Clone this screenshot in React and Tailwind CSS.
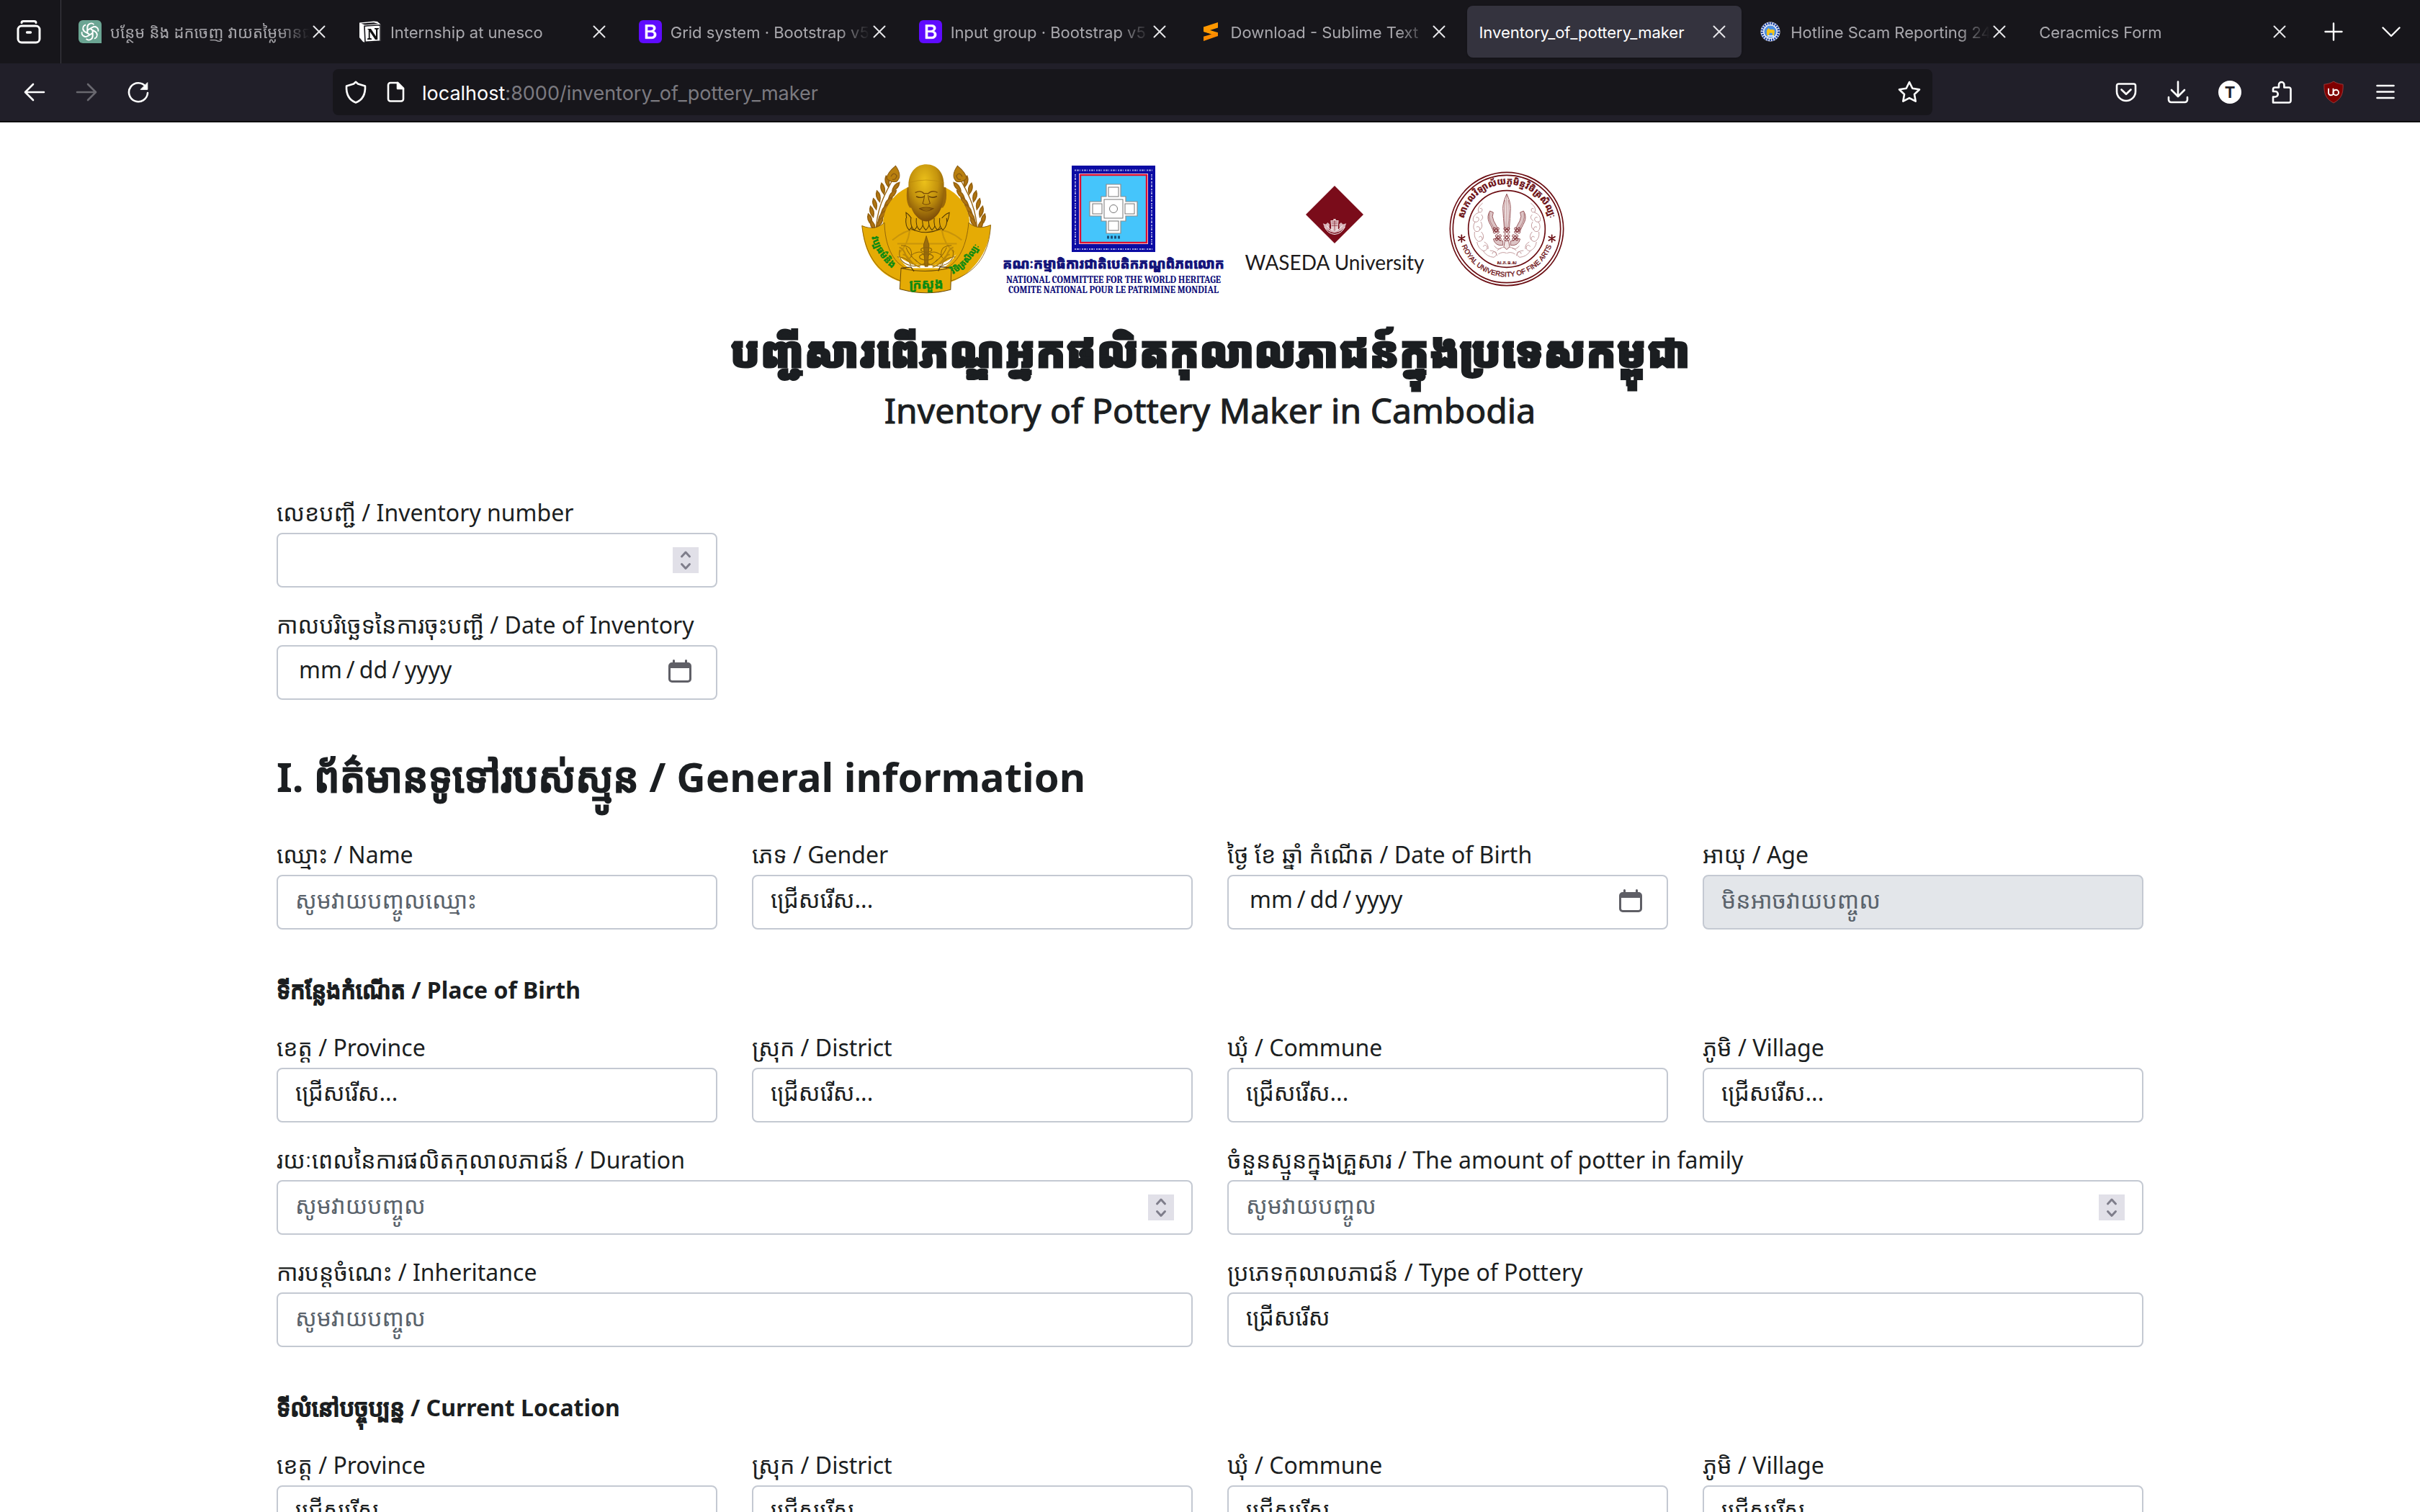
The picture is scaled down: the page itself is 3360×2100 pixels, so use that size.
import React, { useId } from "react";

const stroke = {
  fill: "none",
  stroke: "currentColor",
  strokeWidth: 2.6,
  strokeLinecap: "round",
  strokeLinejoin: "round",
};

function Icon({ children, className = "size-8" }) {
  return (
    <svg viewBox="0 0 32 32" className={className + " shrink-0"} aria-hidden="true" {...stroke}>
      {children}
    </svg>
  );
}

/* ---------- favicons ---------- */

function ChatFavicon() {
  return (
    <svg viewBox="0 0 32 32" className="size-8 shrink-0" aria-hidden="true">
      <path d="M6 0H26a6 6 0 0 1 6 6V32H6a6 6 0 0 1-6-6V6a6 6 0 0 1 6-6Z" fill="#6ba593" />
      <g fill="none" stroke="#fff" strokeWidth="1.7">
        {[0, 60, 120, 180, 240, 300].map((a) => (
          <path
            key={a}
            transform={`rotate(${a} 16 16)`}
            d="M12.4 18V9.6a5.2 5.2 0 0 1 9-3.4M12.4 13.9l7.2-4.2a5 5 0 0 1 4.8 0"
            strokeLinejoin="round"
          />
        ))}
      </g>
    </svg>
  );
}

function NotionFavicon() {
  return (
    <svg viewBox="0 0 32 32" className="size-8 shrink-0" aria-hidden="true">
      <path d="M1 3.5 21 1.6 26 2l5 4.4V29l-22 2-3-1-5-6Z" fill="#fff" />
      <path d="M8 8.2 30 6.8V29L9 30.4Z" fill="#fff" stroke="#16151a" strokeWidth="1.6" />
      <path d="M3.4 4.6 21 3.2l6.4 1.9L8.4 6.5Z" fill="#16151a" />
      <path
        d="M12.5 12H17l7 10.4V13l-2-.6V11h6v1.3l-1.8.7v14H23l-7.4-11v8.8l2.4.6V27h-6v-1.4l1.8-.7V13.3l-1.4-.2Z"
        fill="#111"
      />
    </svg>
  );
}

function BootstrapFavicon() {
  return (
    <svg viewBox="0 0 32 32" className="size-8 shrink-0" aria-hidden="true">
      <rect width="32" height="32" rx="6" fill="#5f0bff" />
      <path
        d="M9 6.4h8.6c3.6 0 5.6 1.7 5.6 4.6 0 2.2-1.4 3.8-3.3 4.2 2.5.3 4.2 2.1 4.2 4.7 0 3.6-2.6 5.8-6.6 5.8H9Zm3 2.6v5.4h4.2c2.6 0 3.9-1 3.9-2.8S18.9 9 16.9 9Zm0 7.8v6.3h5.1c2.5 0 3.9-1.1 3.9-3.1s-1.5-3.2-4.3-3.2Z"
        fill="#fff"
        stroke="#fff"
        strokeWidth="0.6"
        fillRule="evenodd"
      />
    </svg>
  );
}

function SublimeFavicon() {
  return (
    <svg viewBox="0 0 32 32" className="size-8 shrink-0" aria-hidden="true">
      <path d="M6 9.5 26 3v7.500L13.500 14.600 26 18.300V22L6 16Z" fill="#ff9800" />
      <path d="M6 9.500v6.300l20 6.500v-5L13.500 13.500Z" fill="#ff9800" />
      <path d="M13 20.800 22 17.500l4 .6V22L6 29v-6.300Z" fill="#fb8a00" />
    </svg>
  );
}

function PoliceFavicon() {
  return (
    <svg viewBox="0 0 32 32" className="size-8 shrink-0" aria-hidden="true">
      <circle cx="16" cy="16" r="13.500" fill="#e9eefb" />
      <circle cx="16" cy="16" r="11.500" fill="none" stroke="#1c3f9b" strokeWidth="3.200" strokeDasharray="2 1.400" />
      <circle cx="16" cy="16" r="8.500" fill="#4e8fe0" />
      <path d="M11 20v-6l2.500-3 2 2h5l1.500 2-1 6h-2v-3l-4-.500-1 4h-2Z" fill="#f5c518" />
      <path d="M12 21h9v2h-9Z" fill="#d8e6fb" />
    </svg>
  );
}

function CloseIcon() {
  return (
    <svg viewBox="0 0 18 18" className="size-[18px]" fill="none" stroke="#e6e6ea" strokeWidth="2" strokeLinecap="round" aria-hidden="true">
      <path d="M1.500 1.500 16.500 16.500M16.500 1.500 1.500 16.500" />
    </svg>
  );
}

/* ---------- browser chrome ---------- */

const tabs = [
  { title: "បន្ថែម និង ដកចេញ វាយតម្លៃមានជា", icon: ChatFavicon },
  { title: "Internship at unesco", icon: NotionFavicon },
  { title: "Grid system · Bootstrap v5", icon: BootstrapFavicon },
  { title: "Input group · Bootstrap v5", icon: BootstrapFavicon },
  { title: "Download - Sublime Text", icon: SublimeFavicon },
  { title: "Inventory_of_pottery_maker", active: true },
  { title: "Hotline Scam Reporting 24", icon: PoliceFavicon },
  { title: "Ceracmics Form" },
];

function Tab({ title, icon: TabIcon, active }) {
  return (
    <div
      className={
        "mx-1 my-2 flex h-[72px] min-w-0 flex-1 items-center rounded-lg pl-4 pr-[22px] " +
        (active ? "bg-[#34333e] text-white shadow" : "text-[#a9a8ad]")
      }
    >
      {TabIcon && (
        <span className="mr-3 shrink-0">
          <TabIcon />
        </span>
      )}
      <span
        className={
          "mr-1 min-w-0 flex-1 overflow-hidden whitespace-nowrap pt-0.5 text-[22px] leading-10 " +
          (active ? "" : "[mask-image:linear-gradient(to_right,black_calc(100%_-_44px),transparent)]")
        }
      >
        {title}
      </span>
      <button type="button" aria-label={"Close " + title} className="shrink-0">
        <CloseIcon />
      </button>
    </div>
  );
}

function TabStrip() {
  return (
    <div className="flex h-[88px] items-center bg-[#17161b]">
      <button type="button" aria-label="Firefox View" className="flex w-[84px] justify-center pr-1 text-white">
        <svg viewBox="0 0 34 34" className="size-[34px]" fill="none" stroke="currentColor" strokeWidth="3" strokeLinecap="round" aria-hidden="true">
          <path d="M7 4.500Q7.300 2.500 9.500 2.500h15Q26.700 2.500 27 4.500" />
          <rect x="2" y="9" width="30" height="23" rx="5" />
          <path d="M14.500 18h5" strokeWidth="3.400" />
        </svg>
      </button>
      <div className="mr-1 h-full w-px bg-[#3f3e46]" />
      <div className="flex min-w-0 flex-1">
        {tabs.map((t, i) => (
          <Tab key={i} {...t} />
        ))}
      </div>
      <button type="button" aria-label="New tab" className="flex w-20 justify-center text-white">
        <svg viewBox="0 0 26 26" className="size-[26px]" fill="none" stroke="currentColor" strokeWidth="2.400" strokeLinecap="round" aria-hidden="true">
          <path d="M13 1.500v23M1.500 13h23" />
        </svg>
      </button>
      <button type="button" aria-label="List all tabs" className="flex w-20 justify-center text-white">
        <svg viewBox="0 0 26 26" className="size-[26px]" fill="none" stroke="currentColor" strokeWidth="2.400" strokeLinecap="round" strokeLinejoin="round" aria-hidden="true">
          <path d="M1.500 7.500 13 19 24.500 7.500" />
        </svg>
      </button>
    </div>
  );
}

function ToolButton({ label, children, className = "text-white" }) {
  return (
    <button type="button" aria-label={label} className={"flex w-[72px] justify-center " + className}>
      {children}
    </button>
  );
}

function Toolbar() {
  return (
    <div className="flex h-[82px] items-center border-b-2 border-[#0c0c0d] bg-[#211f29] pl-3 pr-3">
      <ToolButton label="Back">
        <Icon><path d="M29 16H3.500M14 5 3 16l11 11" /></Icon>
      </ToolButton>
      <ToolButton label="Forward" className="text-[#69686f]">
        <Icon><path d="M3 16h25.500M18 5l11 11-11 11" /></Icon>
      </ToolButton>
      <ToolButton label="Reload">
        <Icon>
          <path d="M26.500 8.500A13 13 0 1 0 29 17" />
          <path d="M28.800 3v9.300h-9.300Z" fill="currentColor" strokeWidth="1" />
        </Icon>
      </ToolButton>
      <div className="ml-[234px] mr-[233px] flex h-16 flex-1 items-center rounded-lg bg-[#17161b] pl-4 pr-4">
        <Icon>
          <path d="M16 1.800 19 4.500 29 7.500C29.500 19 25 27 16 30.500 7 27 2.500 19 3 7.500L13 4.500Z" stroke="white" />
        </Icon>
        <svg viewBox="0 0 32 32" className="ml-6 size-8 shrink-0" fill="none" stroke="white" strokeWidth="2.600" strokeLinejoin="round" aria-hidden="true">
          <path d="M8 3h10l8 8v14.500a3 3 0 0 1-3 3H8a3 3 0 0 1-3-3V6a3 3 0 0 1 3-3Z" />
          <path d="M18 3v8h8Z" fill="white" />
        </svg>
        <div className="ml-5 flex-1 whitespace-nowrap pt-1 text-[27px] leading-10 text-[#7b7a80]">
          <span className="text-white">localhost</span>:8000/inventory_of_pottery_maker
        </div>
        <button type="button" aria-label="Bookmark this page" className="text-white">
          <Icon><path d="m16 2 4.300 8.800 9.700 1.400-7 6.800 1.700 9.700-8.700-4.600-8.700 4.600L9 19 2 12.200l9.700-1.400Z" /></Icon>
        </button>
      </div>
      <ToolButton label="Save to Pocket">
        <Icon>
          <path d="M5.500 4.500h21a2.500 2.500 0 0 1 2.500 2.500v8a13 13 0 0 1-26 0V7a2.500 2.500 0 0 1 2.500-2.500Z" />
          <path d="m9.500 12.500 6.500 6.300 6.500-6.300" />
        </Icon>
      </ToolButton>
      <ToolButton label="Downloads">
        <Icon>
          <path d="M16 1.500v20M7 13l9 9 9-9" />
          <path d="M3 23v3.500A3.500 3.500 0 0 0 6.500 30h19a3.500 3.500 0 0 0 3.500-3.500V23" />
        </Icon>
      </ToolButton>
      <ToolButton label="Account">
        <span className="flex size-8 items-center justify-center rounded-full bg-white text-[22px] font-bold leading-8 text-[#211f29]">T</span>
      </ToolButton>
      <ToolButton label="Extensions">
        <Icon>
          <path d="M4 30.500V22.500h3a3.700 3.700 0 0 0 0-7.500H4v-3a2.500 2.500 0 0 1 2.500-2.500H12V5.700a3.700 3.700 0 0 1 7.400 0V9.500H26A2.500 2.500 0 0 1 28.500 12V28a2.500 2.500 0 0 1-2.500 2.500Z" />
        </Icon>
      </ToolButton>
      <ToolButton label="uBlock Origin">
        <svg viewBox="0 0 32 34" className="h-8 w-[30px]" aria-hidden="true">
          <path d="M16 1C20 4 26 5 30 5.500 30.500 20 27 27 16 33 5 27 1.500 20 2 5.500 6 5 12 4 16 1Z" fill="#800000" stroke="#9b3b3b" />
          <path d="M8.500 11.500v6.500a3.500 3.500 0 0 0 3.500 3.500q2 0 3.500-1.500V11.500" fill="none" stroke="#fff" strokeWidth="2" />
          <circle cx="19.500" cy="17.500" r="4" fill="none" stroke="#fff" strokeWidth="2" />
        </svg>
      </ToolButton>
      <ToolButton label="Open application menu">
        <Icon><path d="M4.500 7h23M4.500 15.500h23M4.500 24h23" /></Icon>
      </ToolButton>
    </div>
  );
}

/* ---------- institution logos ---------- */

const leaves = [
  [150, 128, -12], [182, 150, 38], [132, 158, -12], [168, 182, 42], [114, 190, -14],
  [152, 212, 42], [100, 222, -14], [138, 242, 40], [88, 254, -14], [126, 270, 36], [80, 286, -16], [118, 298, 30], [92, 312, -20],
];

function Garland() {
  return (
    <g>
      <path d="M175 110C150 160 105 230 104 335" fill="none" stroke="#9a6612" strokeWidth="4" />
      {leaves.map(([x, y, r], i) => (
        <path key={i} d={`M${x} ${y - 26}q14 20 0 46q-14-26 0-46Z`} transform={`rotate(${r} ${x} ${y})`} fill="#b0740f" stroke="#96620f" strokeWidth="5" />
      ))}
      <path d="M183 60C200 85 206 110 186 126Q160 130 147 112Q148 90 183 60Z" fill="#b9800f" stroke="#8a5a12" strokeWidth="3" />
      <path d="M164 105q12-24 24-3q-6 20-18 14" fill="none" stroke="#8a5a12" strokeWidth="4" />
    </g>
  );
}

function MinistryLogo() {
  return (
    <svg viewBox="0 0 182 182" className="size-[182px] shrink-0" role="img" aria-label="Ministry of Culture and Fine Arts">
      <defs>
        <radialGradient id="gold-head" cx="0.450" cy="0.300" r="0.700">
          <stop offset="0" stopColor="#ecc11a" />
          <stop offset="0.550" stopColor="#c4930d" />
          <stop offset="1" stopColor="#7c4c08" />
        </radialGradient>
        <path id="arc-left" d="M14 102Q22 134 56 156" />
        <path id="arc-right" d="M127 154Q158 136 170 98" />
      </defs>
      <g transform="scale(0.344 0.333) translate(-45 -50)">
        <Garland />
        <g transform="translate(616 0) scale(-1 1)"><Garland /></g>
        <ellipse cx="307" cy="305" rx="175" ry="172" fill="#e5ab05" />
        <path d="M47 308C90 330 110 320 138 296C170 380 190 460 240 487H375C430 450 455 380 478 297C510 320 530 322 567 305C565 400 510 505 405 545H208C100 510 55 420 47 308Z" fill="#e5ab05" />
        <path d="M47 310C85 325 110 320 138 297C140 390 170 460 225 488M567 307C530 322 505 320 478 297C470 390 440 460 385 488M47 310C60 420 100 500 203 540M567 307C560 420 520 500 407 540" fill="none" stroke="#80560a" strokeWidth="2.500" />
        <path d="M170 370Q240 310 300 330Q380 310 450 370M190 385h240M240 330q-8 60-40 90M370 330q10 60 50 90" fill="none" stroke="#c8940a" strokeWidth="6" />
        {[0, 1].map((k) => (
          <g key={k} transform={k ? "translate(614 0) scale(-1 1)" : undefined}>
            <path d="M205 392q45 0 42 40q50-35 58 25M200 410q-10 50 40 65q30 10 62-10M190 440q40 0 55 35M250 435q-22 15-5 30M225 400q10 30 45 60M262 450q25 30 40 20" fill="none" stroke="#8f660a" strokeWidth="3" />
            <path d="M198 400c30 10 20 50 55 70M212 430c25 0 25 40 70 52" fill="none" stroke="#b98709" strokeWidth="6" />
          </g>
        ))}
        <path d="M307 352l11 38-5 90h-12l-5-90Z" fill="#9b6d0c" stroke="#6f4907" strokeWidth="2" />
        <ellipse cx="307" cy="410" rx="22" ry="10" fill="none" stroke="#8f660a" strokeWidth="4" />
        <ellipse cx="307" cy="440" rx="28" ry="13" fill="none" stroke="#8f660a" strokeWidth="4" />
        <path d="M225 255Q228 315 250 325Q305 350 360 325Q395 310 400 255Q380 262 365 285H250Q240 265 225 255Z" fill="#dda407" stroke="#4e3606" strokeWidth="3" />
        {[238, 258, 280, 305, 330, 352, 374].map((x, i) => (
          <path key={i} d={`M${x - 13} 278q-4 34 13 50q20-18 15-50`} fill="#dda407" stroke="#4e3606" strokeWidth="3" />
        ))}
        <path d="M230 150q-8 60 10 85h12V150ZM386 150q8 60-12 85h-12V150Z" fill="#9a6809" />
        <path d="M307 54c45 0 72 38 71 85c0 30-2 80-14 105c-12 26-36 48-57 48s-46-22-57-48c-13-28-15-75-15-105c0-47 27-85 72-85Z" fill="url(#gold-head)" />
        <path d="M262 172q22-12 36 4q8-2 16 0q16-16 38-5" fill="none" stroke="#7b4d08" strokeWidth="4" />
        <path d="M266 188q18 9 32 0M318 188q16 8 32-1" fill="none" stroke="#5f3a06" strokeWidth="4" />
        <path d="M300 182q-4 28-8 34q14 12 30 0q-6-14-8-34M278 238q28-10 58 0q-28 20-58 0M280 240h54" fill="none" stroke="#6f4307" strokeWidth="3" />
        <path d="M236 130q70-22 142 0" fill="none" stroke="#b98a0e" strokeWidth="2" />
        <path d="M205 487Q305 512 408 485L405 576Q305 604 200 574Z" fill="#e5ab05" stroke="#6f4d09" strokeWidth="3" />
        <path d="M205 487l40-5 12 18M408 485l-45-4-8 18" fill="none" stroke="#5c3e08" strokeWidth="4" />
      </g>
      <g fill="#0a8a12" stroke="#0a8a12" strokeWidth="0.500" fontWeight="bold" fontFamily="'Noto Sans Khmer', 'Noto Sans', sans-serif">
        <text x="90" y="174" fontSize="18" textAnchor="middle">ក្រសួង</text>
        <text fontSize="13"><textPath href="#arc-left">វប្បធម៌និង</textPath></text>
        <text fontSize="12"><textPath href="#arc-right">វិចិត្រសិល្បៈ</textPath></text>
      </g>
    </svg>
  );
}

function HeritageLogo() {
  return (
    <div className="flex w-[300px] shrink-0 flex-col items-center whitespace-nowrap pt-1 text-[#12127a]">
      <svg viewBox="0 0 116 120" className="h-[120px] w-[116px]" aria-hidden="true">
        <rect width="116" height="120" fill="#0b0ba3" />
        <g fill="none" stroke="#9d9de0" strokeWidth="2">
          <path d="M4 6.500H112" strokeDasharray="2 1 3 1 1 2" />
          <path d="M4 116H112" strokeDasharray="2 1 3 1 1 2" />
          <path d="M5 12V110" strokeDasharray="2 1 1 1 3 2" />
          <path d="M111 12V110" strokeDasharray="2 1 1 1 3 2" />
        </g>
        <rect x="10.500" y="11.500" width="95" height="97" fill="#45c5fb" stroke="#f1dfe6" strokeWidth="1" />
        <rect x="12" y="13" width="92" height="94" fill="none" stroke="#e01030" strokeWidth="2.400" />
        <path d="M48 26H68V43H75V50H91V70H75V77H68V94H48V77H41V70H25V50H41V43H48Z" fill="#fff" stroke="#8c8c8c" strokeWidth="1.200" />
        <g fill="none" stroke="#777" strokeWidth="1">
          <rect x="51" y="30" width="14" height="13" />
          <rect x="51" y="77" width="14" height="13" />
          <rect x="29" y="53" width="13" height="14" />
          <rect x="74" y="53" width="13" height="14" />
          <rect x="45" y="47" width="26" height="26" />
          <circle cx="58" cy="60" r="5.500" />
        </g>
        <path d="M49 99.500h18" stroke="#1b4f78" strokeWidth="4" strokeDasharray="3 2" />
      </svg>
      <div className="text-[19px] font-bold leading-8 [-webkit-text-stroke:1px_currentColor] [font-family:'Noto_Sans_Khmer','Noto_Sans',sans-serif]">
        គណៈកម្មាធិការជាតិបេតិកភណ្ឌពិភពលោក
      </div>
      <div className="font-serif text-[13px] font-bold leading-[14px]">NATIONAL COMMITTEE FOR THE WORLD HERITAGE</div>
      <div className="font-serif text-[13px] font-bold leading-[14px]">COMITE NATIONAL POUR LE PATRIMINE MONDIAL</div>
    </div>
  );
}

function WasedaLogo() {
  return (
    <div className="flex w-[246px] shrink-0 flex-col items-center pt-1">
      <svg viewBox="0 0 242 242" className="size-20" aria-hidden="true">
        <path d="M121 0 242 121 121 242 0 121Z" fill="#7a0c1a" />
        <path d="M104 145h12v-6h10v6h12l-2 22v20h-30v-20Z" fill="#e6ccd0" />
        <path d="M108 152h26M108 160h26M108 168h26M121 145v40" stroke="#7a0c1a" strokeWidth="2" />
        <path d="M72 158q8 34 48 40q42-6 50-40l-14 4-8-8-8 8 2 22-22 6-22-6 2-22-8-8-8 8Z" fill="#d9b5ba" />
        <path d="M78 172q14 30 43 32q30-2 44-32M88 168q14 18 32 22M154 168q-14 18-32 22" fill="none" stroke="#fff" strokeWidth="3" />
      </svg>
      <div className="mt-2 whitespace-nowrap text-[28px] leading-9 text-[#1d1a1b] [font-family:Lato,sans-serif]">
        WASEDA University
      </div>
    </div>
  );
}

function FineArtsLogo() {
  return (
    <svg viewBox="0 0 480 480" className="size-40 shrink-0" role="img" aria-label="Royal University of Fine Arts">
      <defs>
        <path id="seal-top" d="M58 256A183 183 0 1 1 422 256" />
        <path id="seal-bottom" d="M47 292A200 200 0 0 0 433 292" />
      </defs>
      <g fill="none" stroke="#6b0d12">
        <circle cx="240" cy="240" r="236" strokeWidth="5" />
        <circle cx="240" cy="240" r="224" strokeWidth="5" />
        <circle cx="240" cy="240" r="160" strokeWidth="5" />
      </g>
      <g fill="#6b0d12" stroke="#6b0d12" fontWeight="bold">
        <text fontSize="38" strokeWidth="1" fontFamily="'Noto Sans Khmer', 'Noto Sans', sans-serif">
          <textPath href="#seal-top" startOffset="50%" textAnchor="middle">សាកលវិទ្យាល័យភូមិន្ទវិចិត្រសិល្បៈ</textPath>
        </text>
        <text fontSize="29" fontFamily="'Liberation Sans', sans-serif" fontWeight="normal" strokeWidth="1">
          <textPath href="#seal-bottom" startOffset="50%" textAnchor="middle">ROYAL UNIVERSITY OF FINE ARTS</textPath>
        </text>
        <text x="240" y="386" fontSize="20" strokeWidth="0" textAnchor="middle" fontFamily="'Noto Sans Khmer', 'Noto Sans', sans-serif">ស.ភ.ធ.ស</text>
      </g>
      <g stroke="#6b0d12" strokeWidth="5" strokeLinecap="round">
        {[52, 428].map((x) => (
          <path key={x} d={`M${x} 265v30M${x - 13} 272l26 16M${x + 13} 272l-26 16`} />
        ))}
      </g>
      <g fill="none" stroke="#9a5a5e" strokeWidth="3">
        <path d="M240 94q-16 34-16 60q2 40 6 90h20q4-50 6-90q0-26-16-60Z" fill="#f2e6e6" />
        <path d="M240 96V240M233 120q-6 50 2 120M247 120q6 50-2 120" strokeWidth="2" />
        {[0, 1].map((k) => (
          <g key={k} transform={k ? "translate(480 0) scale(-1 1)" : undefined}>
            <path d="M170 165q-14 22-4 46q14 26 18 38l20 2q-2-20-18-44q-10-20-2-36Z" fill="#dcc4c5" />
            <path d="M168 172q-4 20 4 38q12 20 20 40" strokeWidth="2" />
            <path d="M184 282q8 30 40 26v-18q-16 0-20-14Z" fill="#dcc4c5" />
            <g stroke="#7f2d33">
              {[[196, 246], [205, 276]].map(([x, y]) => (
                <g key={y}>
                  <circle cx={x} cy={y} r="6" /><circle cx={x - 7} cy={y - 7} r="5" /><circle cx={x + 7} cy={y - 7} r="5" />
                  <circle cx={x - 7} cy={y + 7} r="5" /><circle cx={x + 7} cy={y + 7} r="5" />
                </g>
              ))}
            </g>
            <g stroke="#b98a8d" strokeWidth="2.500">
              <path d="M140 132q-24 18-18 36q14 8 16-8q-2-10-10-4M126 170q-30 12-26 36q16 12 24-4q0-14-12-10M134 180q14 14-4 26M108 210q-14 24 2 40q18 4 18-12q-4-12-14-6M132 210q12 20-4 34M106 252q-4 28 16 40q18 0 16-16q-6-10-14-2M134 252q16 18 4 34M116 294q4 28 28 38q18-4 14-20q-10-10-16 2M146 294q20 10 16 30M142 332q16 24 44 26q16-8 8-22q-14-4-14 8M170 330q26 0 30 22M200 330q20-20 40-10M205 345q18-12 34-4M188 310q14 20 30 10" />
            </g>
          </g>
        ))}
        <g stroke="#7f2d33">
          {[246, 276].map((y) => (
            <g key={y}>
              <circle cx="240" cy={y} r="6" /><circle cx="233" cy={y - 7} r="5" /><circle cx="247" cy={y - 7} r="5" />
              <circle cx="233" cy={y + 7} r="5" /><circle cx="247" cy={y + 7} r="5" />
            </g>
          ))}
        </g>
        <path d="M232 290h16l4 24-12 12-12-12Z" fill="#f2e6e6" />
      </g>
    </svg>
  );
}

/* ---------- form ---------- */

const control =
  "block h-[76px] w-full appearance-none rounded-lg border-2 border-[#c4c9d2] bg-white px-6 pb-2 text-[32px] leading-[64px] text-[#1b1e21] placeholder:overflow-visible placeholder:leading-[64px] placeholder:text-[#5a636c] placeholder:opacity-100 disabled:bg-[#e3e6ea]";

function Spinner() {
  return (
    <span className="absolute right-[26px] top-5 flex size-9 items-center justify-center bg-[#e1e0e8]" aria-hidden="true">
      <svg viewBox="0 0 36 36" className="size-9" fill="none" stroke="#7f7e8b" strokeWidth="3" strokeLinecap="round" strokeLinejoin="round">
        <path d="m12.500 13 5.500-6 5.500 6M12.500 23.500l5.500 6 5.500-6" />
      </svg>
    </span>
  );
}

function CalendarIcon() {
  return (
    <svg viewBox="0 0 32 32" className="pointer-events-none absolute right-9 top-5 size-8" aria-hidden="true">
      <path
        d="M6 1.500a1.500 1.500 0 0 1 3 0V4H23V1.500a1.500 1.500 0 0 1 3 0V4h1a5 5 0 0 1 5 5V27a5 5 0 0 1-5 5H5a5 5 0 0 1-5-5V9A5 5 0 0 1 5 4H6ZM3 12V27a2 2 0 0 0 2 2H27a2 2 0 0 0 2-2V12Z"
        fill="#5f5f66"
        fillRule="evenodd"
      />
    </svg>
  );
}

function Field({ label, type = "text", placeholder, disabled, wide }) {
  const id = useId();
  return (
    <div className={wide ? "col-span-2" : ""}>
      <label htmlFor={id} className="mb-1 block h-12 whitespace-nowrap text-[32px] leading-[48px]">
        {label}
      </label>
      <div className="relative">
        {type === "select" && (
          <select id={id} className={control}>
            <option>{placeholder}</option>
          </select>
        )}
        {type === "text" && <input id={id} type="text" placeholder={placeholder} disabled={disabled} className={control} />}
        {type === "number" && (
          <>
            <input
              id={id}
              type="number"
              placeholder={placeholder}
              className={control + " [&::-webkit-inner-spin-button]:appearance-none"}
            />
            <Spinner />
          </>
        )}
        {type === "date" && (
          <>
            <input
              id={id}
              type="date"
              className={
                control +
                " [&::-webkit-calendar-picker-indicator]:opacity-0 [&::-webkit-datetime-edit]:p-0 [&::-webkit-datetime-edit]:pl-1 [&::-webkit-datetime-edit-text]:px-[5px] [&::-webkit-datetime-edit-fields-wrapper]:p-0"
              }
            />
            <CalendarIcon />
          </>
        )}
      </div>
    </div>
  );
}

/* Khmer words in headings take the regular cut, thickened by a thin outline. */
function Khmer({ children, large }) {
  return (
    <span
      lang="km"
      className={"font-normal " + (large ? "[-webkit-text-stroke:3px_currentColor]" : "[-webkit-text-stroke:2px_currentColor]")}
    >
      {children}
    </span>
  );
}

const choose = "ជ្រើសរើស...";
const enter = "សូមវាយបញ្ចូល";

function Place() {
  return (
    <>
      <Field label="ខេត្ត / Province" type="select" placeholder={choose} />
      <Field label="ស្រុក / District" type="select" placeholder={choose} />
      <Field label="ឃុំ / Commune" type="select" placeholder={choose} />
      <Field label="ភូមិ / Village" type="select" placeholder={choose} />
    </>
  );
}

const grid = "grid grid-cols-4 gap-x-12 gap-y-7";

export default function App() {
  return (
    <div className="flex h-screen flex-col bg-white">
      <header className="shrink-0 [font-family:Inter,'Noto_Sans_Khmer',sans-serif]">
        <TabStrip />
        <Toolbar />
      </header>
      <main className="min-h-0 flex-1 overflow-y-auto text-[#1b1e21] [font-family:'Noto_Sans','Noto_Sans_Khmer',sans-serif] [scrollbar-width:none]">
        <form className="mx-auto max-w-[2640px] px-6 pt-14">
          <div className="flex h-[184px] items-center justify-center pl-2">
            <MinistryLogo />
            <div className="ml-[18px]"><HeritageLogo /></div>
            <div className="ml-[34px]"><WasedaLogo /></div>
            <div className="ml-9"><FineArtsLogo /></div>
          </div>
          <h1 className="mt-8 text-center text-[59px] font-black leading-[90px] [-webkit-text-stroke:3px_currentColor]">
            បញ្ជីសារពើភណ្ឌអ្នកផលិតកុលាលភាជន៍ក្នុងប្រទេសកម្ពុជា
          </h1>
          <h2 className="mt-2 text-center text-[48px] font-normal leading-[60px] [-webkit-text-stroke:1px_currentColor]">
            Inventory of Pottery Maker in Cambodia
          </h2>

          <div className={grid + " mt-[88px]"}>
            <div className="flex flex-col gap-7">
              <Field label="លេខបញ្ជី / Inventory number" type="number" />
              <Field label="កាលបរិច្ឆេទនៃការចុះបញ្ជី / Date of Inventory" type="date" />
            </div>
          </div>

          <h3 className="mt-[68px] text-[56px] font-bold leading-[76px]">
            I. <Khmer large>ព័ត៌មានទូទៅរបស់ស្មូន</Khmer> / General information
          </h3>

          <div className={grid + " mt-[47px]"}>
            <Field label="ឈ្មោះ / Name" placeholder="សូមវាយបញ្ចូលឈ្មោះ" />
            <Field label="ភេទ / Gender" type="select" placeholder={choose} />
            <Field label="ថ្ងៃ ខែ ឆ្នាំ កំណើត / Date of Birth" type="date" />
            <Field label="អាយុ / Age" placeholder="មិនអាចវាយបញ្ចូល" disabled />
          </div>

          <h4 className="mb-8 mt-[60px] text-[32px] font-bold leading-[48px]">
            <Khmer>ទីកន្លែងកំណើត</Khmer> / Place of Birth
          </h4>
          <div className={grid}>
            <Place />
            <Field label="រយៈពេលនៃការផលិតកុលាលភាជន៍ / Duration" type="number" placeholder={enter} wide />
            <Field label="ចំនួនស្មូនក្នុងគ្រួសារ / The amount of potter in family" type="number" placeholder={enter} wide />
            <Field label="ការបន្តចំណេះ / Inheritance" placeholder={enter} wide />
            <Field label="ប្រភេទកុលាលភាជន៍ / Type of Pottery" type="select" placeholder="ជ្រើសរើស" wide />
          </div>

          <h4 className="mb-8 mt-[60px] text-[32px] font-bold leading-[48px]">
            <Khmer>ទីលំនៅបច្ចុប្បន្ន</Khmer> / Current Location
          </h4>
          <div className={grid}>
            <Place />
          </div>
        </form>
      </main>
    </div>
  );
}
